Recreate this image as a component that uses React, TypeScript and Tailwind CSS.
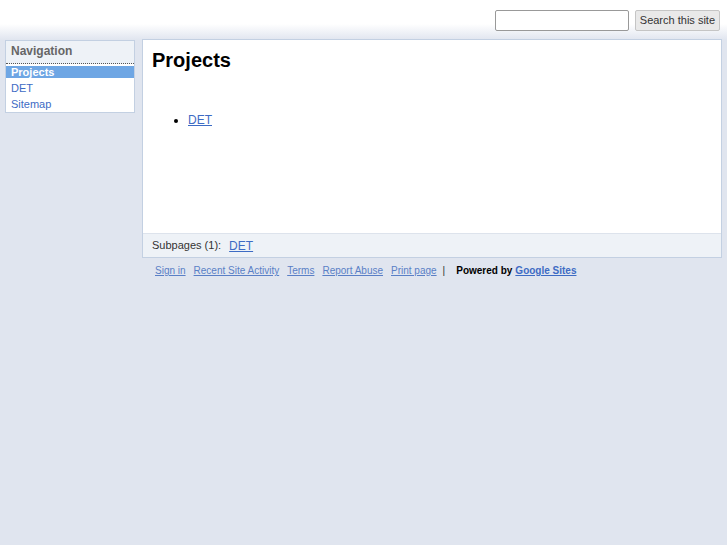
export default function App() {
  return (
    <div
      className="min-h-[545px] w-[727px] bg-[linear-gradient(#ffffff_0px,#ffffff_24px,#e0e5ef_40px,#e0e5ef_100%)] text-[#222]"
      style={{ fontFamily: '"Liberation Sans", Arial, sans-serif' }}
    >
      {/* Header / search */}
      <div className="flex justify-end items-start gap-[6px] pt-[10px] pr-[7px] h-[39px]">
        <input
          type="text"
          className="w-[134px] h-[21px] border border-[#999] rounded-[2px] bg-white"
        />
        <button className="h-[21px] px-[4px] text-[11px] text-[#333] bg-[#e9e9e9] border border-[#c5c5c5] rounded-[2px]">
          Search this site
        </button>
      </div>

      <div className="flex items-start pl-[5px] gap-[7px]">
        {/* Sidebar */}
        <div className="w-[130px] border border-[#c3d0e2] bg-white mt-[1px]">
          <div className="h-[23px] bg-[#eef2f7] px-[5px] pt-[3px] text-[12px] leading-[14px] font-bold text-[#666] border-b border-dotted border-[#555]">
            Navigation
          </div>
          <div className="mt-[2px] bg-[#6ea6e4] text-white font-bold text-[11px] px-[5px] h-[12px] leading-[12px]">
            Projects
          </div>
          <div className="text-[11px] text-[#3d6bc4] px-[5px] h-[16px] leading-[16px] mt-[2px]">DET</div>
          <div className="text-[11px] text-[#3d6bc4] px-[5px] h-[16px] leading-[16px]">Sitemap</div>
        </div>

        {/* Main content */}
        <div className="w-[580px]">
          <div className="border border-[#c3d0e2] bg-white">
            <div className="h-[193px] px-[9px] pt-[7px]">
              <h1 className="text-[20px] font-bold text-black leading-[26px]">Projects</h1>
              <ul className="mt-[38px] ml-[36px] list-disc text-[12px]">
                <li className="text-black">
                  <a href="#" className="text-[#3d6bc4] underline">DET</a>
                </li>
              </ul>
            </div>
            <div className="h-[24px] bg-[#eef2f7] border-t border-[#dde3ec] px-[9px] flex items-center text-[11px] text-[#333]">
              Subpages (1):
              <a href="#" className="ml-[8px] text-[12px] text-[#3d6bc4] underline">DET</a>
            </div>
          </div>

          {/* Footer */}
          <div className="mt-[5px] pl-[13px] flex items-center text-[10px]">
            <a href="#" className="text-[#5a7fc6] underline">Sign in</a>
            <a href="#" className="ml-[8px] text-[#5a7fc6] underline">Recent Site Activity</a>
            <a href="#" className="ml-[8px] text-[#5a7fc6] underline">Terms</a>
            <a href="#" className="ml-[8px] text-[#5a7fc6] underline">Report Abuse</a>
            <a href="#" className="ml-[8px] text-[#5a7fc6] underline">Print page</a>
            <span className="ml-[6px] text-[#333]">|</span>
            <span className="ml-[11px] font-bold text-black">Powered by</span>
            <a href="#" className="ml-[3px] font-bold text-[#3d6bc4] underline">Google Sites</a>
          </div>
        </div>
      </div>
    </div>
  );
}
